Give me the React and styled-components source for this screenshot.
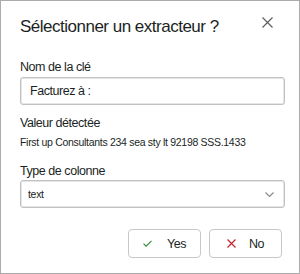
import React from "react";
import styled, { createGlobalStyle } from "styled-components";

const Global = createGlobalStyle`
  html, body { margin: 0; padding: 0; background: #fff; }
  body { font-family: "Liberation Sans", Arial, sans-serif; color: #201f1e; }
  * { box-sizing: border-box; }
`;

const Dialog = styled.div`
  width: 300px;
  height: 274px;
  border: 1px solid #ababab;
  background: #fff;
  padding: 14px 16px 0 19px;
  display: flex;
  flex-direction: column;
`;

const Header = styled.div`
  display: flex;
  align-items: center;
  justify-content: space-between;
  height: 24px;
`;

const Title = styled.h1`
  margin: 0;
  font-size: 17px;
  font-weight: 400;
  color: #201f1e;
  letter-spacing: -0.5px;
`;

const CloseButton = styled.button`
  align-self: flex-start;
  margin-top: -1px;
  border: 0;
  background: none;
  padding: 0;
  width: 16px;
  height: 16px;
  margin-right: 8px;
  display: flex;
  align-items: center;
  justify-content: center;
  color: #605e5c;
`;

const Label = styled.div`
  font-size: 12.5px;
  letter-spacing: -0.45px;
  color: #201f1e;
  margin-top: ${(p) => p.$mt}px;
  line-height: 16px;
`;

const Field = styled.div`
  margin-top: ${(p) => p.$mt}px;
  width: 265px;
  height: 28px;
  border: 1px solid #c1c1c1;
  box-shadow: inset 0 0 0 1px #e6e6e6;
  border-radius: 3px;
  display: flex;
  align-items: center;
  justify-content: space-between;
  padding: 0 10px 0 ${(p) => p.$pl}px;
  font-size: ${(p) => p.$fs}px;
  letter-spacing: ${(p) => p.$ls}px;
  color: #201f1e;
`;

const Detected = styled.div`
  margin-top: 4px;
  font-size: 10.5px;
  line-height: 14px;
  letter-spacing: -0.3px;
  color: #201f1e;
`;

const Footer = styled.div`
  margin-top: 21px;
  display: flex;
  justify-content: flex-end;
  gap: 8px;
  padding-right: 1px;
`;

const Button = styled.button`
  width: 73px;
  height: 29px;
  border: 1px solid #c8c8c8;
  border-radius: 4px;
  background: #fff;
  display: flex;
  align-items: center;
  justify-content: center;
  gap: ${(p) => p.$gap}px;
  font-family: "Liberation Sans", Arial, sans-serif;
  font-size: 12.5px;
  letter-spacing: -0.5px;
  color: #201f1e;
  padding: 0;
`;

export default function App() {
  return (
    <>
      <Global />
      <Dialog>
        <Header>
          <Title>Sélectionner un extracteur ?</Title>
          <CloseButton aria-label="Fermer">
            <svg width="11" height="11" viewBox="0 0 11 11">
              <path d="M0.5 0.5L10.5 10.5M10.5 0.5L0.5 10.5" stroke="#605e5c" strokeWidth="1.2" fill="none" />
            </svg>
          </CloseButton>
        </Header>
        <Label $mt={20}>Nom de la clé</Label>
        <Field $mt={2} $pl={9} $fs={12.5} $ls={-0.45}>Facturez à :</Field>
        <Label $mt={10}>Valeur détectée</Label>
        <Detected>First up Consultants 234 sea sty lt 92198 SSS.1433</Detected>
        <Label $mt={14}>Type de colonne</Label>
        <Field $mt={1} $pl={7} $fs={10.5} $ls={-0.3}>
          <span>text</span>
          <svg width="9" height="5" viewBox="0 0 9 5">
            <path d="M0.5 0.5L4.5 4.5L8.5 0.5" stroke="#8a8886" strokeWidth="1.1" fill="none" />
          </svg>
        </Field>
        <Footer>
          <Button $gap={15}>
            <svg width="9" height="7" viewBox="0 0 9 7">
              <path d="M0.5 3.6L3.1 6.2L8.5 0.8" stroke="#2e8b32" strokeWidth="1.1" fill="none" />
            </svg>
            Yes
          </Button>
          <Button $gap={13}>
            <svg width="9" height="9" viewBox="0 0 9 9">
              <path d="M0.5 0.5L8.5 8.5M8.5 0.5L0.5 8.5" stroke="#c4262e" strokeWidth="1.2" fill="none" />
            </svg>
            No
          </Button>
        </Footer>
      </Dialog>
    </>
  );
}
